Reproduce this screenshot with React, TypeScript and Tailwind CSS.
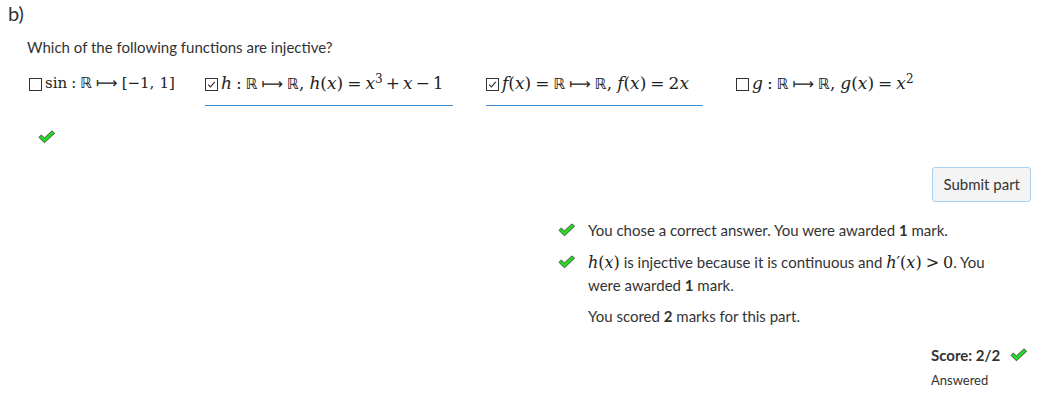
import React from "react";

const Check = ({ className = "" }: { className?: string }) => (
  <svg className={"block " + className} width="18" height="14" viewBox="0 0 18 14">
    <path
      d="M1 7.3 L3.3 5 L6.4 7.9 L14 0.9 L16.6 3.2 L6.4 12.8 Z"
      fill="#1fe01f"
      stroke="#4a4a4a"
      strokeWidth="1"
      strokeLinejoin="round"
    />
  </svg>
);

const Box = ({ checked }: { checked?: boolean }) => (
  <span className="inline-block w-[13px] h-[13px] border border-[#333] mr-[3px] relative top-[1px] shrink-0">
    {checked && (
      <svg width="11" height="11" viewBox="0 0 11 11" className="absolute left-0 top-0">
        <path d="M2.2 5.6 L4.4 7.8 L8.8 2.8" fill="none" stroke="#333" strokeWidth="1.2" />
      </svg>
    )}
  </span>
);

const M = ({ children, size = "text-[16px]" }: { children: React.ReactNode; size?: string }) => (
  <span className={"[font-family:'DejaVu_Serif',serif] leading-none text-[#222] whitespace-nowrap " + size}>{children}</span>
);
const I = ({ children }: { children: React.ReactNode }) => <i className="italic">{children}</i>;
const BB = () => <span className="[font-family:'DejaVu_Sans',sans-serif] text-[15px]">ℝ</span>;
const Op = ({ c }: { c: string }) => <span className="mx-[4px]">{c}</span>;
const Bin = ({ c }: { c: string }) => <span className="mx-[3px]">{c}</span>;
const Map = () => <span className="mx-[4px] [font-family:'DejaVu_Sans',sans-serif] text-[15px]">⟼</span>;
const Comma = () => <span className="mr-[5px]">,</span>;

export default function App() {
  return (
    <div className="w-[1054px] h-[400px] bg-white text-[#333] [font-family:'Lato',sans-serif] relative overflow-hidden">
      <div className="pl-[8px] text-[20px] leading-[26px] text-[#333]">b)</div>
      <div className="pl-[27px] pr-[23px]">
        <div className="mt-[11px] text-[15px] leading-[20px]">Which of the following functions are injective?</div>
        <div className="flex items-start gap-[33px] mt-[14px] pl-[2px]">
          <div className="flex items-center h-[24px] w-[143px] flex-none whitespace-nowrap">
            <Box />
            <M size="text-[15px]">
              sin<Op c=":" /><BB /><Map />[−1<Comma />1]
            </M>
          </div>
          <div className="flex items-center h-[35px] pb-[10px] border-b border-[#3a8fd6] w-[248px] flex-none">
            <Box checked />
            <M size="text-[17px]">
              <I>h</I><Op c=":" /><BB /><Map /><BB /><Comma /><I>h</I>(<I>x</I>)<Op c="=" /><I>x</I><sup className="text-[12px]">3</sup><Bin c="+" /><I>x</I><Bin c="−" />1
            </M>
          </div>
          <div className="flex items-center h-[35px] pb-[10px] border-b border-[#3a8fd6] w-[217px] flex-none">
            <Box checked />
            <M size="text-[17px]">
              <I>f</I>(<I>x</I>)<Op c="=" /><BB /><Map /><BB /><Comma /><I>f</I>(<I>x</I>)<Op c="=" />2<I>x</I>
            </M>
          </div>
          <div className="flex items-center h-[24px] w-[183px] flex-none">
            <Box />
            <M size="text-[17px]">
              <I>g</I><Op c=":" /><BB /><Map /><BB /><Comma /><I>g</I>(<I>x</I>)<Op c="=" /><I>x</I><sup className="text-[12px]">2</sup>
            </M>
          </div>
        </div>
        <div className="mt-[24px] pl-[11px]">
          <Check />
        </div>
        <div className="flex justify-end mt-[23px]">
          <button className="h-[35px] px-[10px] bg-[#f4f4f4] border border-[#a9d1f2] rounded-[3px] text-[15px] text-[#333]">
            Submit part
          </button>
        </div>
        <div className="flex justify-end mt-[17px]">
          <div className="w-[473px] text-[15px] leading-[23px]">
            <div className="flex items-start gap-[12px]">
              <Check className="mt-[4px] shrink-0" />
              <div>
                You chose a correct answer. You were awarded <b>1</b> mark.
              </div>
            </div>
            <div className="flex items-start gap-[12px] mt-[9px]">
              <Check className="mt-[4px] shrink-0" />
              <div className="w-[420px]">
                <M>
                  <I>h</I>(<I>x</I>)
                </M>{" "}
                is injective because it is continuous and{" "}
                <M>
                  <I>h</I>′(<I>x</I>)<Op c="&gt;" />0
                </M>
                . You were awarded <b>1</b> mark.
              </div>
            </div>
            <div className="pl-[30px] mt-[8px]">
              You scored <b>2</b> marks for this part.
            </div>
          </div>
        </div>
        <div className="flex justify-end mt-[17px]">
          <div className="w-[100px]">
            <div className="flex items-center gap-[10px] text-[15px] font-bold leading-[20px]">
              Score: 2/2 <Check />
            </div>
            <div className="text-[13px] leading-[18px] mt-[6px] text-[#333]">Answered</div>
          </div>
        </div>
      </div>
    </div>
  );
}
